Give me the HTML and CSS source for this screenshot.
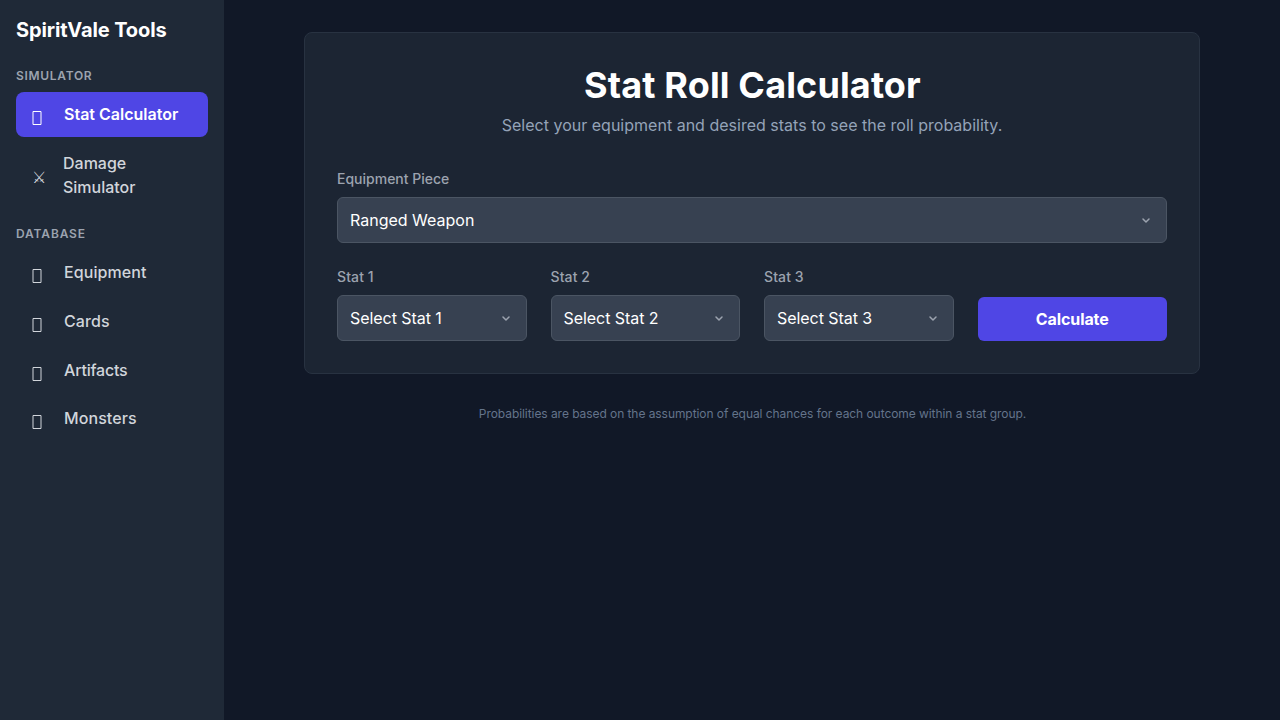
FILE: index.html
```html
<!DOCTYPE html>
<html lang="en">
<head>
<meta charset="UTF-8">
<title>SpiritVale Tools</title>
<link rel="stylesheet" href="styles.css">
</head>
<body>
<div class="layout">
  <aside class="sidebar">
    <h1 class="brand">SpiritVale Tools</h1>
    <h2 class="section">Simulator</h2>
    <nav class="nav">
      <a class="link active"><svg class="icon box" viewBox="0 0 16 14"><path d="M1 .5h8v13H1z"/></svg><span>Stat Calculator</span></a>
      <a class="link tall"><span class="icon swords">&#x2694;</span><span>Damage Simulator</span></a>
    </nav>
    <h2 class="section database">Database</h2>
    <nav class="nav">
      <a class="link wide"><svg class="icon box" viewBox="0 0 16 14"><path d="M1 .5h8v13H1z"/></svg><span>Equipment</span></a>
      <a class="link wide"><svg class="icon box" viewBox="0 0 16 14"><path d="M1 .5h8v13H1z"/></svg><span>Cards</span></a>
      <a class="link tight"><svg class="icon box" viewBox="0 0 16 14"><path d="M1 .5h8v13H1z"/></svg><span>Artifacts</span></a>
      <a class="link wide"><svg class="icon box" viewBox="0 0 16 14"><path d="M1 .5h8v13H1z"/></svg><span>Monsters</span></a>
    </nav>
  </aside>
  <main class="main">
    <section class="card">
      <h2 class="title">Stat Roll Calculator</h2>
      <p class="subtitle">Select your equipment and desired stats to see the roll probability.</p>
      <div class="field">
        <label>Equipment Piece</label>
        <div class="select"><span>Ranged Weapon</span><svg viewBox="0 0 16 16"><path d="M5 7l3 3 3-3"/></svg></div>
      </div>
      <div class="grid">
        <div><label>Stat 1</label><div class="select"><span>Select Stat 1</span><svg viewBox="0 0 16 16"><path d="M5 7l3 3 3-3"/></svg></div></div>
        <div><label>Stat 2</label><div class="select"><span>Select Stat 2</span><svg viewBox="0 0 16 16"><path d="M5 7l3 3 3-3"/></svg></div></div>
        <div><label>Stat 3</label><div class="select"><span>Select Stat 3</span><svg viewBox="0 0 16 16"><path d="M5 7l3 3 3-3"/></svg></div></div>
        <button class="calculate">Calculate</button>
      </div>
    </section>
    <p class="footnote">Probabilities are based on the assumption of equal chances for each outcome within a stat group.</p>
  </main>
</div>
</body>
</html>
```
FILE: styles.css
```css
* { box-sizing: border-box; margin: 0; padding: 0; }
body { font-family: Inter, sans-serif; font-size: 16px; line-height: 24px; background: #111827; color: #e2e8f0; }
.layout { display: flex; min-height: 100vh; }
.sidebar { width: 224px; flex-shrink: 0; padding: 16px; background: #1f2937; }
.brand { font-size: 20px; line-height: 28px; font-weight: 700; letter-spacing: -.12px; color: #fff; margin-bottom: 24px; }
.section { font-size: 12px; line-height: 16px; font-weight: 600; letter-spacing: .7px; text-transform: uppercase; color: #9ca3af; margin-bottom: 8px; }
.database { letter-spacing: .85px; }
.nav { display: flex; flex-direction: column; gap: 4px; margin-bottom: 16px; }
.link { display: flex; align-items: center; height: 44.8px; padding: 0 16px; border-radius: 8px; font-weight: 500; color: #d1d5db; }
.link.tall { height: 68.8px; }
.link.wide { letter-spacing: .08px; }
.link.tight { letter-spacing: -.2px; }
.link.active { background: #4f46e5; color: #fff; font-weight: 600; }
.icon { flex-shrink: 0; margin-right: 16px; }
.box { width: 16px; height: 14px; margin-top: 9px; margin-bottom: 1px; fill: none; stroke: currentColor; stroke-width: 1; }
.swords { width: 15px; padding-top: 3px; }
.main { flex: 1; padding: 32px 80px; }
.card { background: #1c2533; border: 1px solid #283241; border-radius: 8px; padding: 32px; }
.title { font-size: 36px; line-height: 40px; font-weight: 700; letter-spacing: .14px; color: #fff; text-align: center; padding-left: 1px; }
.subtitle { color: #94a3b8; text-align: center; margin: 8px 0 32px; letter-spacing: .01px; }
label { display: block; font-size: 14px; line-height: 20px; font-weight: 500; color: #9ca3af; margin-bottom: 8px; }
.grid label { letter-spacing: .1px; }
.field { margin-bottom: 24px; }
.select { display: flex; align-items: center; justify-content: space-between; height: 46px; padding: 0 12px; color: #fff; background: #374151; border: 1px solid #4b5563; border-radius: 6px; }
.grid .select { letter-spacing: -.06px; }
.select svg { width: 16px; height: 16px; fill: none; stroke: #9ca3af; stroke-width: 1.5; stroke-linecap: round; stroke-linejoin: round; }
.grid { display: grid; grid-template-columns: repeat(4, 1fr); gap: 24px; align-items: end; }
.calculate { height: 44px; border: 0; border-radius: 6px; background: #4f46e5; color: #fff; font: 700 16px/24px Inter, sans-serif; letter-spacing: -.1px; }
.footnote { margin-top: 32px; padding-left: 1px; font-size: 12px; line-height: 16px; letter-spacing: -.06px; color: #64748b; text-align: center; }
```
